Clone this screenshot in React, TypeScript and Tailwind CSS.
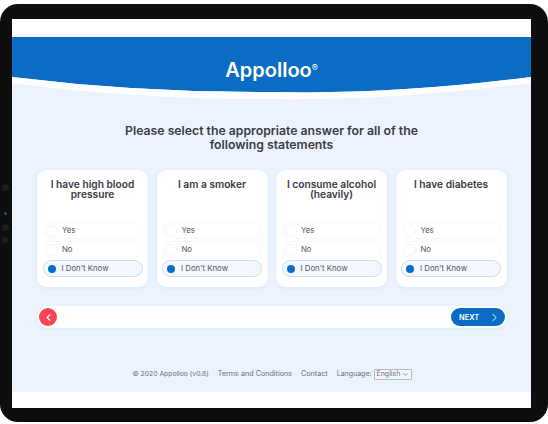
import { ChevronLeft, ChevronRight, ChevronDown } from "lucide-react";

const statements = [
    "I have high blood pressure",
    "I am a smoker",
    "I consume alcohol (heavily)",
    "I have diabetes",
];

const Option = ({ label, selected }: { label: string; selected?: boolean }) => {
    return (
        <div className={`flex items-center h-[17px] rounded-full border ${selected ? "border-[#c5dcfa] bg-[#f3f8ff]" : "border-[#f6f8fb] bg-white"}`}>
            {selected ? (
                <div className="ml-[4px] mr-[1.5px] w-[8px] h-[8px] rounded-full bg-[#0a6cc4]" />
            ) : (
                <div className="ml-[2px] w-[12px] h-[12px] rounded-full border border-[#f3f5f8]" />
            )}
            <span className="ml-[4.5px] text-[7.8px] text-[#55565c]">{label}</span>
        </div>
    );
};

const Card = ({ title }: { title: string }) => {
    return (
        <div className="flex flex-col w-[111px] h-[117px] rounded-[9px] bg-white px-[5.5px] pt-[9px] shadow-[0_1px_4px_rgba(120,160,210,0.15)]">
            <div className="h-[43px] text-center text-[10.2px] leading-[10px] font-semibold text-[#3a3b44]">{title}</div>
            <div className="flex flex-col gap-[2px]">
                <Option label="Yes" />
                <Option label="No" />
                <Option label="I Don't Know" selected />
            </div>
        </div>
    );
};

export default function App() {
    return (
        <div className="w-[548px] h-[424px] bg-white pt-[4px] font-['Inter',sans-serif]">
            <div className="relative h-[418px] rounded-[18px] bg-[#0d0d0d] pt-[15px] pl-[12px] pr-[17px]">
                <div className="absolute left-[2px] top-[180px] w-[7px] h-[7px] rounded-full bg-[#1d1d1d]" />
                <div className="absolute left-[4px] top-[208px] w-[3px] h-[3px] rounded-full bg-[#1f4f86]" />
                <div className="absolute left-[2px] top-[220px] w-[7px] h-[7px] rounded-full bg-[#1d1d1d]" />
                <div className="absolute left-[2px] top-[233px] w-[6px] h-[6px] rounded-full bg-[#1d1d1d]" />

                <div className="flex flex-col h-[389px] bg-white overflow-hidden">
                    <div className="h-[18px] shrink-0 bg-white" />
                    <div className="flex flex-col flex-1 bg-[#ebf4fe]">
                        <div className="relative h-[64px] shrink-0">
                            <svg viewBox="0 0 519 64" className="absolute inset-0 w-[519px] h-[64px]" preserveAspectRatio="none">
                                <path d="M0 0H519V40Q380 58 260 55Q130 56 0 40Z" fill="#0a6cc4" />
                                <path d="M0 40Q130 56 260 55Q380 58 519 40V46Q380 64 260 62Q130 63 0 46Z" fill="#ffffff" />
                            </svg>
                            <div className="relative text-center pt-[20px] text-white text-[20px] leading-[26px] font-semibold">
                                <span>Appolloo</span>
                                <span className="relative top-[-6px] text-[9px] font-normal">®</span>
                            </div>
                        </div>

                        <div className="mt-[23px] text-center text-[12.25px] leading-[14px] font-semibold text-[#3a3b44]">
                            Please select the appropriate answer for all of the<br />following statements
                        </div>

                        <div className="flex gap-[8.5px] mt-[18px] pl-[25px]">
                            {statements.map((s) => (
                                <Card key={s} title={s} />
                            ))}
                        </div>

                        <div className="flex items-center justify-between ml-[25px] mt-[19px] w-[470px] h-[22px] rounded-full bg-white px-[2px] shadow-[0_1px_3px_rgba(120,160,210,0.15)]">
                            <button className="flex items-center justify-center w-[18px] h-[18px] rounded-full bg-[#fb4455] text-white">
                                <ChevronLeft size={11} strokeWidth={2.5} />
                            </button>
                            <button className="flex items-center justify-between w-[54px] h-[18px] rounded-full bg-[#0a6cc4] pl-[8px] pr-[4px] text-white text-[7.5px] font-semibold">
                                <span className="pt-[1px]">NEXT</span>
                                <ChevronRight size={13} strokeWidth={1.8} />
                            </button>
                        </div>

                        <div className="flex items-center justify-center gap-[9px] mt-[41px] pl-[1px] text-[7px] text-[#6e7178]">
                            <span className="text-[6.8px]">© 2020 Appolloo (v0.8)</span>
                            <span className="text-[7.2px]">Terms and Conditions</span>
                            <span className="text-[7.2px]">Contact</span>
                            <span className="flex items-center gap-[2px]">
                                Language:
                                <span className="flex items-center justify-between w-[38px] h-[11px] border border-[#b9bdc3] rounded-[1px] px-[2px] bg-[#f3f7fc]">
                                    English
                                    <ChevronDown size={7} strokeWidth={2.5} />
                                </span>
                            </span>
                        </div>
                    </div>
                    <div className="h-[16px] shrink-0 bg-white" />
                </div>
            </div>
        </div>
    );
}
